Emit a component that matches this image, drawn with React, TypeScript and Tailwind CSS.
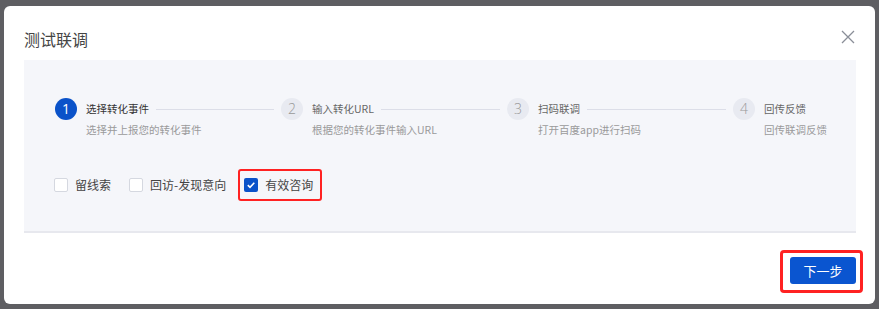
import React from 'react';

const steps = [
    { no: 1, title: '选择转化事件', desc: '选择并上报您的转化事件' },
    { no: 2, title: '输入转化URL', desc: '根据您的转化事件输入URL' },
    { no: 3, title: '扫码联调', desc: '打开百度app进行扫码' },
    { no: 4, title: '回传反馈', desc: '回传联调反馈' },
];

const options = [
    { label: '留线索', checked: false },
    { label: '回访-发现意向', checked: false },
    { label: '有效咨询', checked: true },
];

const App: React.FC = () => {
    return (
        <div className="w-[879px] h-[309px] bg-[#5e5e62] pt-[6px] pl-[4px] font-['Noto_Sans_CJK_SC','Noto_Sans',sans-serif] overflow-hidden">
            <div className="w-[871px] h-[298px] bg-white rounded-[6px] pl-[20px] pr-[19px] flex flex-col">
                {/* Header */}
                <div className="flex items-start justify-between pt-[24px]">
                    <h2 className="text-[16px] leading-[18px] text-[#444]">测试联调</h2>
                    <svg width="16" height="16" viewBox="0 0 16 16" className="mt-[-1px]">
                        <path d="M2 2L14 14M14 2L2 14" stroke="#8a8e98" strokeWidth="1.3" fill="none" />
                    </svg>
                </div>

                {/* Body panel */}
                <div className="mt-[12px] h-[173px] bg-[#f5f6fa] border-b-2 border-[#e7e8ee] pl-[31px] pr-[29px] pt-[38px]">
                    <div className="flex items-start">
                        {steps.map((s, i) => {
                            const last = i === steps.length - 1;
                            const active = i === 0;
                            return (
                                <div key={s.no} className={last ? 'flex items-start shrink-0' : 'flex items-start flex-1'}>
                                    <div
                                        className={
                                            active
                                                ? "w-[22px] h-[22px] rounded-full bg-[#0a52c9] text-white text-[14px] leading-[22px] text-center shrink-0 font-['Open_Sans',sans-serif]"
                                                : "w-[22px] h-[22px] rounded-full bg-[#e8eaf1] text-[#999] text-[14px] leading-[22px] text-center shrink-0 font-light font-['Open_Sans',sans-serif]"
                                        }
                                    >
                                        {s.no}
                                    </div>
                                    <div className="ml-[9px] mt-[3px] flex-1 flex flex-col">
                                        <div className="flex items-center h-[16px]">
                                            <span className={active ? 'text-[10.5px] leading-[16px] text-[#333] whitespace-nowrap' : 'text-[10.5px] leading-[16px] text-[#666] whitespace-nowrap'}>
                                                {s.title}
                                            </span>
                                            {!last && <div className="flex-1 h-px bg-[#dcdee8] ml-[7px] mr-[7px]" />}
                                        </div>
                                        <span className="mt-[5px] text-[10.5px] leading-[16px] text-[#9a9a9a] whitespace-nowrap">{s.desc}</span>
                                    </div>
                                </div>
                            );
                        })}
                    </div>

                    <div className="flex items-center mt-[37px] ml-[-1px] h-[20px]">
                        {options.map(o => (
                            <label key={o.label} className="relative flex items-center mr-[18px]">
                                {o.checked ? (
                                    <span className="w-[14px] h-[14px] rounded-[2px] bg-[#0a52c9] flex items-center justify-center">
                                        <svg width="10" height="10" viewBox="0 0 10 10">
                                            <path d="M1.8 5.2L4 7.3L8.3 2.8" stroke="#fff" strokeWidth="1.6" fill="none" />
                                        </svg>
                                    </span>
                                ) : (
                                    <span className="w-[14px] h-[14px] rounded-[2px] bg-white border border-[#d5d8e0]" />
                                )}
                                <span className="ml-[7px] text-[12px] leading-[20px] text-[#444]">{o.label}</span>
                                {o.checked && (
                                    <span className="absolute -left-[6px] -right-[9px] -top-[6px] -bottom-[6px] border-[2.5px] border-[#ff2222] rounded-[3px]" />
                                )}
                            </label>
                        ))}
                    </div>
                </div>

                {/* Footer */}
                <div className="flex justify-end pt-[24px]">
                    <div className="relative">
                        <button className="w-[66px] h-[27px] rounded-[3px] bg-[#0a55d0] text-white text-[13px] leading-[27px]">下一步</button>
                        <span className="absolute -left-[10px] -right-[7px] -top-[7px] -bottom-[9px] border-[3px] border-[#ff2222] rounded-[4px]" />
                    </div>
                </div>
            </div>
        </div>
    );
};

export default App;
